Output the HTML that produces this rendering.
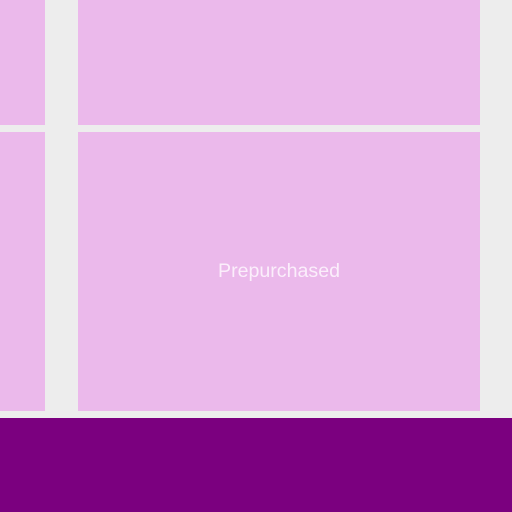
<!DOCTYPE html>
<html><head><style>
html,body{margin:0;padding:0;width:512px;height:512px;overflow:hidden;background:#ededed;position:relative;font-family:"Liberation Sans",sans-serif}
.t{position:absolute;background:#ebb9eb}
.bar{position:absolute;left:0;top:418px;width:512px;height:94px;background:#7b007f}
.lbl{position:absolute;left:78px;width:402px;top:260px;text-align:center;color:#fbeefb;font-size:19.6px}
</style></head><body>
<div class="t" style="left:0;top:0;width:45px;height:125px"></div>
<div class="t" style="left:78px;top:0;width:402px;height:125px"></div>
<div class="t" style="left:0;top:132px;width:45px;height:279px"></div>
<div class="t" style="left:78px;top:132px;width:402px;height:279px"></div>
<div class="lbl">Prepurchased</div>
<div class="bar"></div>
</body></html>
